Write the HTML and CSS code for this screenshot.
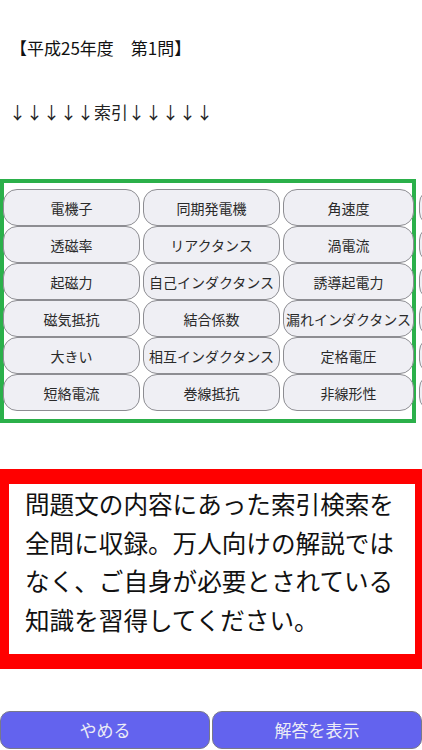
FILE: index.html
```html
<!DOCTYPE html>
<html lang="ja">
<head>
<meta charset="utf-8">
<title>平成25年度 第1問</title>
<link rel="stylesheet" href="styles.css">
</head>
<body>
<div class="screen">
  <h1 class="title">【平成25年度　第1問】</h1>
  <p class="arrows">↓↓↓↓↓索引↓↓↓↓↓</p>

  <section class="index-box">
    <div class="index-grid">
      <button class="term">電機子</button>
      <button class="term">同期発電機</button>
      <button class="term">角速度</button>
      <button class="term term-ghost" aria-hidden="true"></button>

      <button class="term">透磁率</button>
      <button class="term">リアクタンス</button>
      <button class="term">渦電流</button>
      <button class="term term-ghost" aria-hidden="true"></button>

      <button class="term">起磁力</button>
      <button class="term">自己インダクタンス</button>
      <button class="term">誘導起電力</button>
      <button class="term term-ghost" aria-hidden="true"></button>

      <button class="term">磁気抵抗</button>
      <button class="term">結合係数</button>
      <button class="term">漏れインダクタンス</button>
      <button class="term term-ghost" aria-hidden="true"></button>

      <button class="term">大きい</button>
      <button class="term">相互インダクタンス</button>
      <button class="term">定格電圧</button>
      <button class="term term-ghost" aria-hidden="true"></button>

      <button class="term">短絡電流</button>
      <button class="term">巻線抵抗</button>
      <button class="term">非線形性</button>
      <button class="term term-ghost" aria-hidden="true"></button>
    </div>
  </section>

  <section class="notice">
    <p class="notice-text">問題文の内容にあった索引検索を全問に収録。万人向けの解説ではなく、ご自身が必要とされている知識を習得してください。</p>
  </section>

  <footer class="actions">
    <button class="action">やめる</button>
    <button class="action">解答を表示</button>
  </footer>
</div>
</body>
</html>
```

FILE: styles.css
```css
html, body {
  margin: 0;
  padding: 0;
  background: #ffffff;
  overflow: hidden;
}

.screen {
  width: 422px;
  height: 750px;
  overflow: hidden;
  font-family: "Noto Sans CJK JP", "Noto Sans", sans-serif;
  color: #111;
}

.title {
  margin: 0;
  padding: 36px 0 0 10px;
  font-size: 17px;
  font-weight: 400;
  line-height: 24px;
  color: #111;
}

.arrows {
  margin: 40px 0 0 9px;
  font-size: 17px;
  line-height: 24px;
  color: #222;
}

.index-box {
  margin-top: 55px;
  width: 416px;
  height: 244px;
  box-sizing: border-box;
  border: 4px solid #2bb04a;
  padding: 6px 0 0 0;
  position: relative;
}

.index-grid {
  margin-left: -1px;
  display: grid;
  grid-template-columns: 137px 137px 131px 137px;
  grid-auto-rows: 37px;
  column-gap: 3px;
  width: 560px;
}

.term {
  box-sizing: border-box;
  height: 37px;
  margin: 0;
  padding: 0;
  border: 1.5px solid #8d8d92;
  border-radius: 14px;
  background: #efeff4;
  font-family: "Noto Sans CJK JP", "Noto Sans", sans-serif;
  font-size: 14px;
  color: #2a2a2a;
  white-space: nowrap;
  overflow: hidden;
}

.term-ghost {
  margin-left: 2px;
}

.notice {
  margin-top: 46px;
  width: 422px;
  height: 200px;
  box-sizing: border-box;
  border-style: solid;
  border-color: #ff0000;
  border-width: 15px 7px 15px 9px;
  background: #ffffff;
  padding: 0 4px 0 16px;
}

.notice-text {
  margin: 0;
  font-size: 24.6px;
  line-height: 38.5px;
  color: #111;
}

.actions {
  margin-top: 42px;
  display: flex;
  gap: 2px;
}

.action {
  flex: 1;
  height: 38px;
  box-sizing: border-box;
  margin: 0;
  border: 1.5px solid #78788a;
  border-radius: 10px;
  background: #6363ee;
  color: #ececf6;
  font-family: "Noto Sans CJK JP", "Noto Sans", sans-serif;
  font-size: 17px;
  line-height: 20px;
  padding: 0;
}
```
